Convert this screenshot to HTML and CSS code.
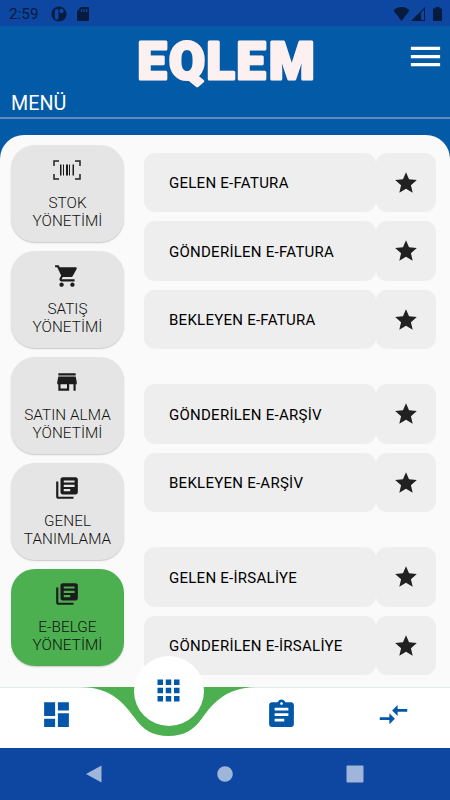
FILE: index.html
```html
<!DOCTYPE html>
<html lang="tr">
<head>
  <meta charset="UTF-8">
  <meta name="viewport" content="width=device-width, initial-scale=1.0">
  <title>EQLEM</title>
  <link rel="stylesheet" href="styles.css">
</head>
<body>
  <!-- Shared icons -->
  <svg class="sprite">
    <symbol id="star" viewBox="0 0 24 24"><path d="M12 17.27L18.18 21l-1.64-7.03L22 9.24l-7.19-.61L12 2 9.19 8.63 2 9.24l5.46 4.73L5.82 21z"/></symbol>
    <symbol id="library" viewBox="0 0 24 24"><path d="M4 6H2v14c0 1.1.9 2 2 2h14v-2H4V6zm16-4H8c-1.1 0-2 .9-2 2v12c0 1.1.9 2 2 2h12c1.1 0 2-.9 2-2V4c0-1.1-.9-2-2-2zm-1 9H9V9h10v2zm-4 4H9v-2h6v2zm4-8H9V5h10v2z"/></symbol>
  </svg>

  <div class="app">
    <div class="status-bar">
      <span class="time">2:59</span>
      <svg class="status-app" viewBox="0 0 16 16"><circle cx="8" cy="8" r="7.6"/><path class="cutout" d="M3.800 4.200a1 1 0 0 1 1-1h2.700v8.600a1.700 1.700 0 0 1-3.700 0z"/><circle class="cutout" cx="10.500" cy="5" r="2.300"/></svg>
      <svg class="status-sd" viewBox="0 0 12 14"><path d="M4 0h7a1 1 0 0 1 1 1v12a1 1 0 0 1-1 1H1a1 1 0 0 1-1-1V4.500z"/><path class="cutout" d="M4 2h1.300v3H4zM6.500 2h1.300v3H6.500zM9 2h1.300v3H9z"/></svg>
      <div class="status-right">
        <svg class="status-wifi" viewBox="0 0 16 14"><path d="M0 3.500C4.500-1.200 11.500-1.200 16 3.500L8 14z"/></svg>
        <svg class="status-signal" viewBox="0 0 14 14"><path d="M14 0v14H0z"/><path class="cutout" d="M10 5.500l3-3V13h-3z"/></svg>
        <svg class="status-battery" viewBox="0 0 9 14"><path d="M2.500 0h4v1.500H9V14H0V1.500h2.500z"/></svg>
      </div>
    </div>

    <header class="header">
      <div class="header-top">
        <svg class="logo" viewBox="0 0 180 56"><text x="2.500 34 71.500 101.500 134" y="44.500">EQLEM</text></svg>
        <svg class="menu-icon" viewBox="0 0 24 24"><path d="M3 18h18v-2H3v2zm0-5h18v-2H3v2zm0-7v2h18V6H3z"/></svg>
      </div>
      <h1 class="title">MENÜ</h1>
    </header>

    <main class="content">
      <nav class="tiles">
        <a class="tile">
          <svg class="barcode" viewBox="0 0 28 20"><path d="M1 6V1h5M22 1h5v5M27 14v5h-5M6 19H1v-5" fill="none" stroke="#222" stroke-width="1.500"/><path d="M7 4.500h1.500v11H7zM10 4.500h1v11h-1zM13 4.500h2v11h-2zM16 4.500h1v11h-1zM19.500 4.500h1.500v11h-1.500z"/></svg>
          <span>STOK<br>YÖNETİMİ</span>
        </a>
        <a class="tile">
          <svg viewBox="0 0 24 24"><path d="M7 18c-1.100 0-1.990.9-1.990 2S5.900 22 7 22s2-.9 2-2-.9-2-2-2zM1 2v2h2l3.600 7.590-1.350 2.450c-.16.28-.25.61-.25.960 0 1.100.9 2 2 2h12v-2H7.420c-.14 0-.25-.11-.25-.25l.03-.12.9-1.630h7.450c.75 0 1.410-.41 1.750-1.030l3.580-6.490c.08-.14.12-.31.12-.48 0-.55-.45-1-1-1H5.210l-.94-2H1zm16 16c-1.100 0-1.990.9-1.990 2s.89 2 1.990 2 2-.9 2-2-.9-2-2-2z"/></svg>
          <span>SATIŞ<br>YÖNETİMİ</span>
        </a>
        <a class="tile">
          <svg viewBox="0 0 24 24"><path d="M20 4H4v2h16V4zm1 10v-2l-1-5H4l-1 5v2h1v6h10v-6h4v6h2v-6h1zm-9 4H6v-4h6v4z"/></svg>
          <span>SATIN ALMA<br>YÖNETİMİ</span>
        </a>
        <a class="tile">
          <svg><use href="#library"/></svg>
          <span>GENEL<br>TANIMLAMA</span>
        </a>
        <a class="tile active">
          <svg><use href="#library"/></svg>
          <span>E-BELGE<br>YÖNETİMİ</span>
        </a>
      </nav>

      <div class="list">
        <div class="group">
          <div class="row"><a class="item">GELEN E-FATURA</a><a class="fav"><svg><use href="#star"/></svg></a></div>
          <div class="row"><a class="item">GÖNDERİLEN E-FATURA</a><a class="fav"><svg><use href="#star"/></svg></a></div>
          <div class="row"><a class="item">BEKLEYEN E-FATURA</a><a class="fav"><svg><use href="#star"/></svg></a></div>
        </div>
        <div class="group">
          <div class="row"><a class="item">GÖNDERİLEN E-ARŞİV</a><a class="fav"><svg><use href="#star"/></svg></a></div>
          <div class="row"><a class="item">BEKLEYEN E-ARŞİV</a><a class="fav"><svg><use href="#star"/></svg></a></div>
        </div>
        <div class="group">
          <div class="row"><a class="item">GELEN E-İRSALİYE</a><a class="fav"><svg><use href="#star"/></svg></a></div>
          <div class="row"><a class="item">GÖNDERİLEN E-İRSALİYE</a><a class="fav"><svg><use href="#star"/></svg></a></div>
        </div>
      </div>
    </main>

    <nav class="bottom-nav">
      <!-- Green dip behind the selected tab -->
      <svg class="notch" viewBox="0 0 177 50"><path d="M0 0C32 0 45 18 54 30C63 43 73 49 88.500 49S114 43 123 30C132 18 145 0 177 0z"/></svg>
      <a class="tab"><svg viewBox="0 0 24 24"><path d="M3 13h8V3H3v10zm0 8h8v-6H3v6zm10 0h8V11h-8v10zm0-18v6h8V3h-8z"/></svg></a>
      <a class="tab selected"><span class="bubble"><svg viewBox="0 0 24 24"><path d="M4 8h4V4H4v4zm6 12h4v-4h-4v4zm-6 0h4v-4H4v4zm0-6h4v-4H4v4zm6 0h4v-4h-4v4zm6-10v4h4V4h-4zm-6 4h4V4h-4v4zm6 6h4v-4h-4v4zm0 6h4v-4h-4v4z"/></svg></span></a>
      <a class="tab"><svg viewBox="0 0 24 24"><path d="M19 3h-4.180C14.400 1.840 13.300 1 12 1c-1.300 0-2.400.84-2.820 2H5c-1.100 0-2 .9-2 2v14c0 1.100.9 2 2 2h14c1.100 0 2-.9 2-2V5c0-1.100-.9-2-2-2zm-7 0c.55 0 1 .45 1 1s-.45 1-1 1-1-.45-1-1 .45-1 1-1zm2 14H7v-2h7v2zm3-4H7v-2h10v2zm0-4H7V7h10v2z"/></svg></a>
      <a class="tab"><svg viewBox="0 0 24 24"><path d="M9.010 14H2v2h7.010v3L13 15l-3.990-4v3zm5.980-1v-3H22V8h-7.010V5L11 9l3.990 4z"/></svg></a>
    </nav>

    <div class="system-nav">
      <svg viewBox="0 0 18 18"><path d="M0 9L15.500 .5v17z"/></svg>
      <svg viewBox="0 0 18 18"><circle cx="9" cy="9" r="7.800"/></svg>
      <svg viewBox="0 0 18 18"><rect x=".5" y=".5" width="17" height="17" rx="1"/></svg>
    </div>
  </div>
</body>
</html>
```
FILE: styles.css
```css
* {
  box-sizing: border-box;
}
body {
  margin: 0;
  font-family: Roboto, sans-serif;
  background: #035aa6;
}
.sprite {
  display: none;
}
.app {
  display: flex;
  flex-direction: column;
  width: 450px;
  height: 800px;
  overflow: hidden;
}

/* Status bar */
.status-bar {
  display: flex;
  align-items: center;
  height: 26px;
  padding: 1px 8px 0 9px;
  background: #0d47a1;
  color: #061b3d;
  fill: #061b3d;
}
.time {
  width: 42px;
  font-size: 15.300px;
}
.cutout {
  fill: #0d47a1;
}
.status-app {
  width: 16px;
  height: 16px;
}
.status-sd {
  width: 12px;
  height: 14px;
  margin-left: 10px;
}
.status-right {
  display: flex;
  align-items: center;
  margin-left: auto;
}
.status-wifi {
  width: 17px;
  height: 14px;
}
.status-signal {
  width: 14px;
  height: 14px;
  margin: 0 8px 0 1px;
}
.status-battery {
  width: 9px;
  height: 14px;
}

/* Header */
.header {
  height: 109px;
  color: #fff;
}
.header-top {
  display: grid;
  grid-template-columns: 1fr 180px 1fr;
  height: 62px;
}
.logo {
  grid-column: 2;
  width: 180px;
  height: 56px;
  margin-top: 8px;
  overflow: visible;
}
.logo text {
  font-family: Roboto, sans-serif;
  font-size: 52px;
  font-weight: 900;
  fill: #fdf0f0;
  stroke: #fdf0f0;
  stroke-width: 3px;
  stroke-linejoin: round;
}
.menu-icon {
  width: 39px;
  height: 39px;
  margin: 11px 5px 0 auto;
  fill: #fff;
}
.title {
  height: 31px;
  margin: 0;
  padding-left: 11px;
  border-bottom: 2px solid #6587c0;
  font-size: 19.700px;
  font-weight: 400;
  line-height: 31px;
}

/* Content */
.content {
  display: flex;
  flex: 1;
  min-height: 0;
  padding: 10px 14px 0 11px;
  background: #fafafa;
  border-radius: 24px 24px 0 0;
}
.tiles {
  display: flex;
  flex-direction: column;
  gap: 9px;
  width: 113px;
}
.tile {
  display: flex;
  flex-direction: column;
  align-items: center;
  height: 97px;
  padding-top: 12px;
  border-radius: 24px;
  background: #e5e5e5;
  box-shadow: 0 1px 1.500px rgba(0, 0, 0, 0.2);
  color: #111;
  font-size: 15.300px;
  font-weight: 330;
  letter-spacing: 0.050px;
  line-height: 17.500px;
  text-align: center;
}
.tile svg {
  width: 26px;
  height: 26px;
  margin: 0 1px 12.400px 0;
  fill: #1c1c1c;
}
.tile .barcode {
  width: 28px;
}
.tile.active {
  background: #4caf50;
}
.list {
  display: flex;
  flex-direction: column;
  flex: 1;
  gap: 35px;
  margin-left: 20px;
  padding-top: 7.500px;
}
.group {
  display: flex;
  flex-direction: column;
  gap: 9px;
}
.row {
  display: flex;
  height: 59.500px;
}
.item,
.fav {
  display: flex;
  align-items: center;
  border-radius: 11px;
  background: #eee;
}
.item {
  flex: 1;
  padding: 1.500px 0 0 25px;
  color: #000;
  font-size: 15px;
  font-weight: 450;
  letter-spacing: 0.260px;
}
.fav {
  justify-content: center;
  width: 60.500px;
  padding-top: 1px;
}
.fav svg {
  width: 26px;
  height: 26px;
  fill: #212121;
}

/* Bottom navigation */
.bottom-nav {
  position: relative;
  display: flex;
  height: 61px;
  border-top: 1px solid #dfeee8;
  background: #fff;
}
.notch {
  position: absolute;
  top: -1px;
  left: 80px;
  width: 177px;
  height: 50px;
  fill: #4caf50;
}
.tab {
  display: flex;
  flex: 1;
  align-items: center;
  justify-content: center;
}
.tab svg {
  width: 33px;
  height: 33px;
  margin-top: -7px;
  fill: #0357a8;
}
.bubble {
  position: absolute;
  top: -32px;
  display: flex;
  align-items: center;
  justify-content: center;
  width: 70px;
  height: 70px;
  border-radius: 50%;
  background: #fff;
}
.tab .bubble svg {
  margin-top: -1px;
}

/* System navigation */
.system-nav {
  display: flex;
  align-items: center;
  justify-content: center;
  gap: 112px;
  height: 52px;
  background: #0d47a1;
}
.system-nav svg {
  width: 18px;
  height: 18px;
  fill: #9fb5da;
}
```
